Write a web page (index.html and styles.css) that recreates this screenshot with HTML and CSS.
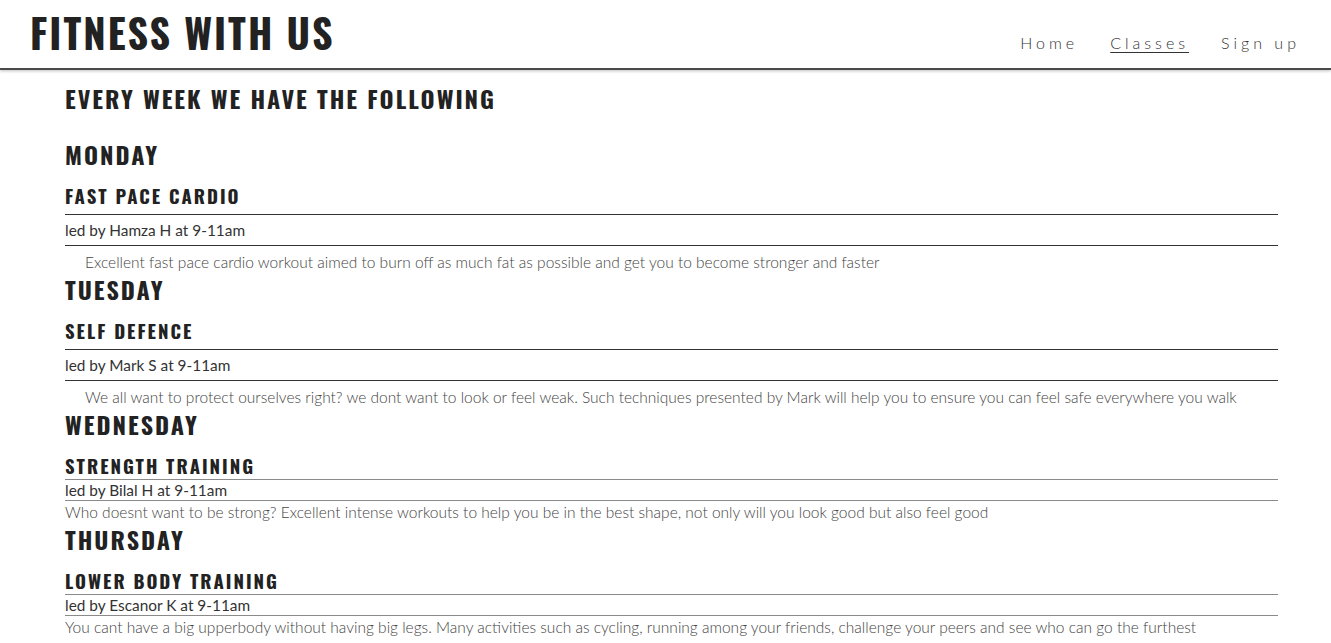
FILE: index.html
```html
<!DOCTYPE html>
<html lang="en">
<head>
<meta charset="utf-8">
<title>Fitness With Us - Classes</title>
<link rel="stylesheet" href="styles.css">
</head>
<body>
<header class="site-header">
  <h1 class="brand">Fitness With Us</h1>
  <nav class="nav">
    <a class="nav-link" href="#">Home</a>
    <a class="nav-link active" href="#">Classes</a>
    <a class="nav-link" href="#">Sign up</a>
  </nav>
</header>
<main class="schedule">
  <h2 class="intro">Every week we have the following</h2>

  <section class="day">
    <h2 class="day-name">Monday</h2>
    <h3 class="class-title dark">Fast pace cardio</h3>
    <p class="class-leader dark">led by Hamza H at 9-11am</p>
    <p class="class-desc indented">Excellent fast pace cardio workout aimed to burn off as much fat as possible and get you to become stronger and faster</p>
  </section>

  <section class="day">
    <h2 class="day-name">Tuesday</h2>
    <h3 class="class-title dark">Self defence</h3>
    <p class="class-leader dark">led by Mark S at 9-11am</p>
    <p class="class-desc indented">We all want to protect ourselves right? we dont want to look or feel weak. Such techniques presented by Mark will help you to ensure you can feel safe everywhere you walk</p>
  </section>

  <section class="day">
    <h2 class="day-name">Wednesday</h2>
    <h3 class="class-title light">Strength training</h3>
    <p class="class-leader light">led by Bilal H at 9-11am</p>
    <p class="class-desc compact">Who doesnt want to be strong? Excellent intense workouts to help you be in the best shape, not only will you look good but also feel good</p>
  </section>

  <section class="day">
    <h2 class="day-name">Thursday</h2>
    <h3 class="class-title light">Lower body training</h3>
    <p class="class-leader light">led by Escanor K at 9-11am</p>
    <p class="class-desc compact">You cant have a big upperbody without having big legs. Many activities such as cycling, running among your friends, challenge your peers and see who can go the furthest</p>
  </section>
</main>
</body>
</html>
```

FILE: styles.css
```css
* { box-sizing: border-box; }

html, body {
  margin: 0;
  padding: 0;
  background: #fff;
}

body {
  font-family: Lato, "Noto Sans", sans-serif;
  color: #333;
  overflow: hidden;
}

.site-header {
  height: 70px;
  display: flex;
  justify-content: space-between;
  align-items: flex-start;
  padding: 0 31px 0 30px;
  border-bottom: 2px solid #4a4a4a;
  box-shadow: 0 1px 3px rgba(0,0,0,0.25);
}

.brand {
  margin: 8px 0 0 0;
  font-family: Oswald, "Noto Sans", "DejaVu Sans Condensed", sans-serif;
  font-stretch: 62.5%;
  font-weight: 700;
  font-size: 40px;
  line-height: 48px;
  letter-spacing: 2px;
  text-transform: uppercase;
  color: #222;
}

.nav {
  display: flex;
  gap: 32px;
  margin-top: 31px;
}

.nav-link {
  font-family: Lato, sans-serif;
  font-weight: 300;
  font-size: 16px;
  line-height: 24px;
  letter-spacing: 4px;
  color: #333;
  text-decoration: none;
}

.nav-link.active {
  text-decoration: underline;
  text-underline-offset: 3px;
}

.schedule {
  padding: 17px 53px 0 65px;
}

.intro,
.day-name,
.class-title {
  font-family: Oswald, "Noto Sans", "DejaVu Sans Condensed", sans-serif;
  font-stretch: 62.5%;
  font-weight: 700;
  text-transform: uppercase;
  color: #222;
  margin: 0;
}

.intro {
  font-size: 24px;
  line-height: 22px;
  letter-spacing: 2px;
  margin-bottom: 34px;
}

.day-name {
  font-size: 24px;
  line-height: 22px;
  letter-spacing: 2px;
  margin-bottom: 21px;
}

.class-title {
  font-size: 18.72px;
  line-height: 19px;
  letter-spacing: 2px;
}

.class-title.dark {
  padding-bottom: 9px;
  border-bottom: 1px solid #333;
}

.class-title.light {
  padding-bottom: 4px;
  border-bottom: 1px solid #8a8a8a;
}

.class-leader {
  margin: 0;
  font-size: 15.4px;
  font-weight: 400;
  color: #333;
}

.class-leader.dark {
  line-height: 30px;
  border-bottom: 1px solid #333;
}

.class-leader.light {
  line-height: 20px;
  border-bottom: 1px solid #8a8a8a;
}

.class-desc {
  margin: 0;
  font-size: 15.5px;
  font-weight: 300;
  color: #444;
}

.class-desc.indented {
  padding-left: 20px;
  margin-top: 4px;
  line-height: 24px;
  margin-bottom: 4px;
}

.class-desc.compact {
  line-height: 22px;
  margin-bottom: 5px;
}
```
